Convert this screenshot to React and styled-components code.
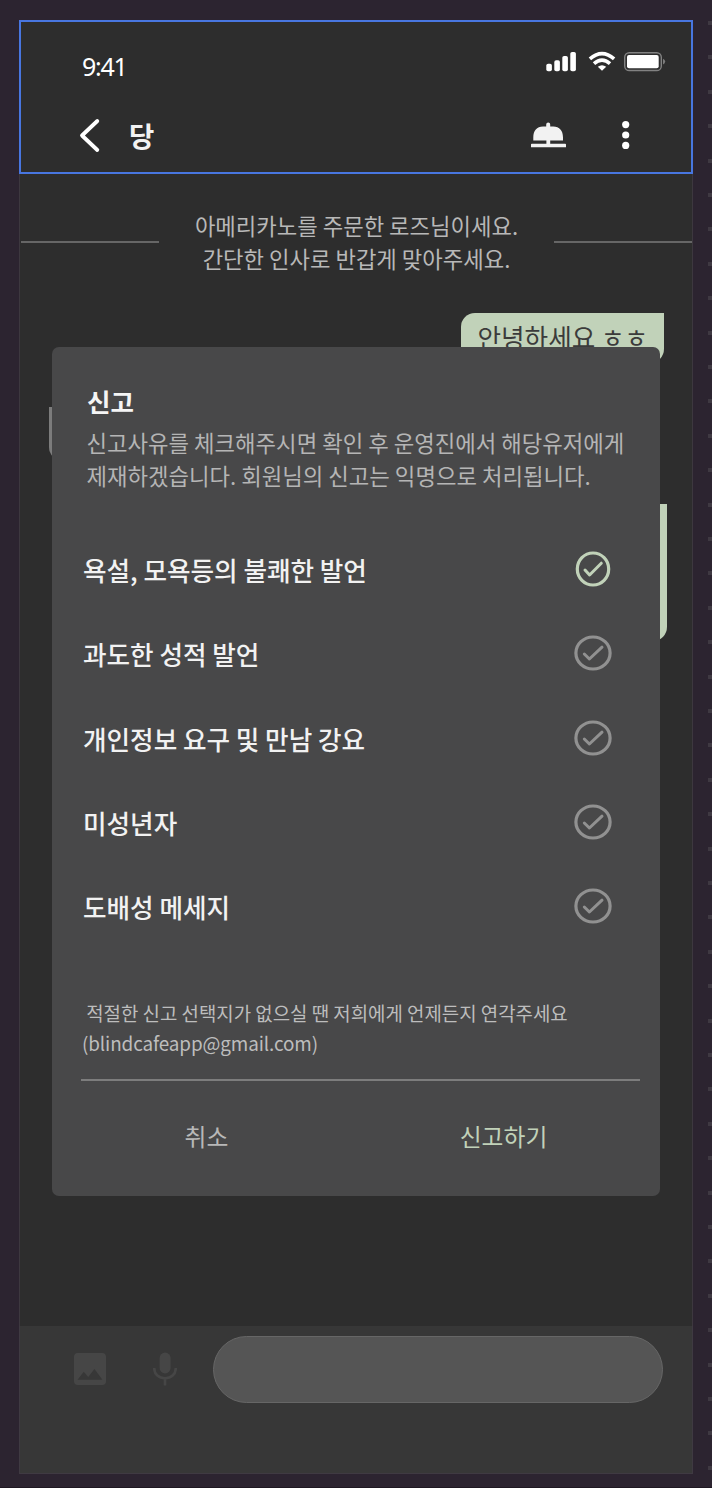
import React from "react";
import styled, { createGlobalStyle } from "styled-components";

const Global = createGlobalStyle`
  * { box-sizing: border-box; }
  body { margin: 0; background: #2c2430; font-family: "Noto Sans CJK KR", sans-serif; }
  p, h1, h2, ul { margin: 0; padding: 0; font-weight: inherit; }
  svg { display: block; flex: none; }
`;

const Canvas = styled.div`
  position: relative;
  width: 712px;
  height: 1488px;
  padding: 20px 0 0 19px;
  background: #2c2430;
  border-bottom: 1px solid #1f1822;
  overflow: hidden;
`;

const Ruler = styled.div`
  position: absolute;
  top: 21px;
  right: 0;
  width: 4px;
  height: 1467px;
  background: repeating-linear-gradient(to bottom, #3f3942 0, #3f3942 4px, transparent 4px, transparent 34.4px);
`;

const Phone = styled.main`
  position: relative;
  display: flex;
  flex-direction: column;
  width: 674px;
  height: 1454px;
  background: #2d2d2d;
`;

const Header = styled.header`
  height: 154px;
  border: 2px solid #4876e0;
  flex: none;
`;

const StatusBar = styled.div`
  display: flex;
  justify-content: space-between;
  height: 85px;
  padding: 28px 25px 0 61px;
`;

const Clock = styled.time`
  font: 400 25px/32px "Noto Sans", sans-serif;
  letter-spacing: -1.3px;
  color: #fff;
`;

const NavBar = styled.nav`
  display: flex;
  align-items: center;
  height: 56px;
  padding: 0 61px 0 58px;
`;

const RoomName = styled.h1`
  flex: 1;
  padding-left: 28px;
  font-size: 27.5px;
  font-weight: 700;
  line-height: 40px;
  color: #f2f2f2;
`;

const Actions = styled.div`
  display: flex;
  align-items: center;
  gap: 55px;
`;

const Chat = styled.section`
  flex: 1;
  display: flex;
  flex-direction: column;
  border: 1px solid #3d383f;
  border-width: 0 1px;
`;

const Greeting = styled.div`
  display: flex;
  justify-content: space-between;
  height: 138.5px;
  padding: 35px 0 0 1px;
`;

const Rule = styled.span`
  width: 138px;
  height: 2px;
  margin-top: 32px;
  background: #666;
`;

const GreetingText = styled.p`
  font-size: 22.25px;
  line-height: 33px;
  text-align: center;
  color: #b8b8b8;
`;

const Bubble = styled.div`
  align-self: ${(p) => (p.$mine ? "flex-end" : "flex-start")};
  flex: none;
  width: ${(p) => p.$w}px;
  height: ${(p) => p.$h}px;
  margin: ${(p) => p.$m};
  padding: 6.5px 0 0 16.5px;
  border-radius: ${(p) => (p.$mine ? "14px 0 14px 14px" : "0 14px 14px 14px")};
  background: ${(p) => (p.$mine ? "#c1d2b9" : "#7c7c7c")};
  font-size: 25.6px;
  line-height: 36px;
  white-space: nowrap;
  color: #3b3b3b;
`;

const Composer = styled.footer`
  display: flex;
  align-items: flex-start;
  height: 148px;
  padding: 9.5px 29px 0 54px;
  background: #373737;
  border: 1px solid #3f3a42;
  border-top: 0;
`;

const ComposerIcons = styled.div`
  display: flex;
  align-items: center;
  justify-content: space-between;
  width: 103px;
  height: 67px;
  margin-right: 36px;
`;

const Field = styled.div`
  flex: 1;
  height: 67px;
  border: 1.5px solid #666;
  border-radius: 34px;
  background: #555;
`;

const Dialog = styled.section`
  position: absolute;
  top: 327px;
  left: 33px;
  display: flex;
  flex-direction: column;
  width: 608px;
  height: 849px;
  padding: 35px 20px 0 30px;
  border-radius: 7px;
  background: #484849;
`;

const DialogTitle = styled.h2`
  padding-left: 5px;
  font-size: 25.5px;
  font-weight: 700;
  line-height: 38px;
  color: #f5f5f5;
`;

const Description = styled.p`
  padding-left: 4.5px;
  margin-top: 6px;
  font-size: 22.3px;
  line-height: 32.5px;
  white-space: nowrap;
  color: #b5b5b5;
`;

const Reasons = styled.ul`
  margin-top: 36px;
  list-style: none;
`;

const Reason = styled.li`
  display: flex;
  align-items: center;
  justify-content: space-between;
  height: 84.25px;
  padding-right: 28px;
  font-size: 25.6px;
  font-weight: 500;
  color: #f2f2f2;
`;

const ReasonLabel = styled.span`
  padding: 2px 0 0 1px;
  line-height: 38px;
`;

const Note = styled.p`
  margin-top: 50px;
  font-size: 18.9px;
  line-height: 29.5px;
  white-space: pre;
  color: #bdbdbd;
`;

const Email = styled.span`
  letter-spacing: -0.12px;
`;

const Buttons = styled.div`
  display: flex;
  height: 112px;
  margin: 22px 0 0 -1px;
  border-top: 2px solid #7d7d7d;
`;

const Button = styled.button`
  flex: none;
  width: ${(p) => p.$w}px;
  padding: 0;
  border: 0;
  background: none;
  font: 400 23.8px/36px "Noto Sans CJK KR", sans-serif;
  color: ${(p) => (p.$primary ? "#c1d2b9" : "#b8b8b8")};
`;

const StatusIcons = () => (
  <svg width="120" height="22" viewBox="546 50 120 22">
    <g fill="#fff">
      <rect x="546.3" y="63.7" width="5.6" height="7.5" rx="1.8" />
      <rect x="554.3" y="60.2" width="5.6" height="11" rx="1.8" />
      <rect x="562.3" y="56" width="5.6" height="15.2" rx="1.8" />
      <rect x="570.3" y="52" width="5.6" height="19.2" rx="1.8" />
      <path d="M602 70.8 L597.8 66.8 Q602 63.5 606.2 66.8 Z" />
    </g>
    <g fill="none" stroke="#fff" strokeWidth="3.6">
      <path d="M589.9 58.9 Q602 48.2 614.1 58.9" />
      <path d="M594 63.6 Q602 56.6 610 63.6" />
    </g>
    <rect x="624.7" y="52.7" width="36.6" height="17.8" rx="4.6" fill="none" stroke="#828282" strokeWidth="1.4" />
    <rect x="627" y="55" width="31.7" height="13.2" rx="2" fill="#fff" />
    <path d="M663 58.7 Q665.2 59.5 665.2 61.6 Q665.2 63.8 663 64.6 Z" fill="#7c7c7c" />
  </svg>
);

const BackIcon = () => (
  <svg width="22" height="36" viewBox="79 117 22 36">
    <path d="M97.3 121 L82 135.5 L97.3 150" fill="none" stroke="#fff" strokeWidth="3.8" strokeLinecap="round" strokeLinejoin="round" />
  </svg>
);

const BellIcon = () => (
  <svg width="36" height="28" viewBox="531 121.500 36 28" fill="#f2f2f2">
    <path d="M533.3 141 V138 C533.3 131 536.8 127 543 127 H546.2 V125 A2 2 0 0 1 550.2 125 V127 H553.3 C559.5 127 563 131 563 138 V141 H550.2 V144.2 H565.2 Q566 144.2 566 145 V147.8 H531 V145 Q531 144.2 531.8 144.2 H546.4 V141 Z" />
  </svg>
);

const MoreIcon = () => (
  <svg width="8" height="30" viewBox="0 0 8 30" fill="#fff">
    <circle cx="3.700" cy="4.6" r="3.6" />
    <circle cx="3.700" cy="15" r="3.6" />
    <circle cx="3.700" cy="25.4" r="3.6" />
  </svg>
);

const ImageIcon = () => (
  <svg width="32" height="32" viewBox="3 3 18 18" fill="#464646">
    <path d="M21 19V5c0-1.1-.9-2-2-2H5c-1.1 0-2 .9-2 2v14c0 1.1.9 2 2 2h14c1.1 0 2-.9 2-2zM8.500 13.500l2.500 3.010L14.500 12l4.500 6H5l3.500-4.500z" />
  </svg>
);

const MicIcon = () => (
  <svg width="24" height="34" viewBox="0 0 24 34">
    <rect x="6.6" y=".6" width="11" height="20.8" rx="5.5" fill="#464646" />
    <path d="M1.2 16 C1.2 22.5 6 26.3 12 26.3 C18 26.3 22.800 22.5 22.8 16 M12 26.3 V33.5" fill="none" stroke="#464646" strokeWidth="2.6" />
  </svg>
);

const CheckIcon = ({ checked }) => (
  <svg width="38" height="36" viewBox="0 0 38 36" fill="none" stroke={checked ? "#c1d2b9" : "#919191"} strokeLinecap="round" strokeLinejoin="round">
    <ellipse cx="19" cy="18" rx={checked ? 15.7 : 17.1} ry="16" strokeWidth="3.2" />
    <path d={checked ? "M11 19 L15.6 24 L27.3 12.2" : "M10.3 19 L15.4 24 L28 12.2"} strokeWidth="3" />
  </svg>
);

const reasons = [
  "욕설, 모욕등의 불쾌한 발언",
  "과도한 성적 발언",
  "개인정보 요구 및 만남 강요",
  "미성년자",
  "도배성 메세지",
];

export default function App() {
  return (
    <Canvas>
      <Global />
      <Phone>
        <Header>
          <StatusBar>
            <Clock>9:41</Clock>
            <StatusIcons />
          </StatusBar>
          <NavBar>
            <BackIcon />
            <RoomName>당</RoomName>
            <Actions>
              <BellIcon />
              <MoreIcon />
            </Actions>
          </NavBar>
        </Header>
        <Chat>
          <Greeting>
            <Rule />
            <GreetingText>
              아메리카노를 주문한 로즈님이세요.
              <br />
              간단한 인사로 반갑게 맞아주세요.
            </GreetingText>
            <Rule />
          </Greeting>
          <Bubble $mine $w={203} $h={50} $m="0 28px 0 0">안녕하세요 ㅎㅎ</Bubble>
          <Bubble $w={203} $h={54} $m="44px 0 0 29px" />
          <Bubble $mine $w={300} $h={137} $m="43px 25px 0 0" />
        </Chat>
        <Composer>
          <ComposerIcons>
            <ImageIcon />
            <MicIcon />
          </ComposerIcons>
          <Field />
        </Composer>
        <Dialog>
          <DialogTitle>신고</DialogTitle>
          <Description>
            신고사유를 체크해주시면 확인 후 운영진에서 해당유저에게
            <br />
            제재하겠습니다. 회원님의 신고는 익명으로 처리됩니다.
          </Description>
          <Reasons>
            {reasons.map((label, i) => (
              <Reason key={label}>
                <ReasonLabel>{label}</ReasonLabel>
                <CheckIcon checked={i === 0} />
              </Reason>
            ))}
          </Reasons>
          <Note>
            {" 적절한 신고 선택지가 없으실 땐 저희에게 언제든지 연각주세요\n"}
            <Email>(blindcafeapp@gmail.com)</Email>
          </Note>
          <Buttons>
            <Button $w={251}>취소</Button>
            <Button $w={343} $primary>신고하기</Button>
          </Buttons>
        </Dialog>
      </Phone>
      <Ruler />
    </Canvas>
  );
}
